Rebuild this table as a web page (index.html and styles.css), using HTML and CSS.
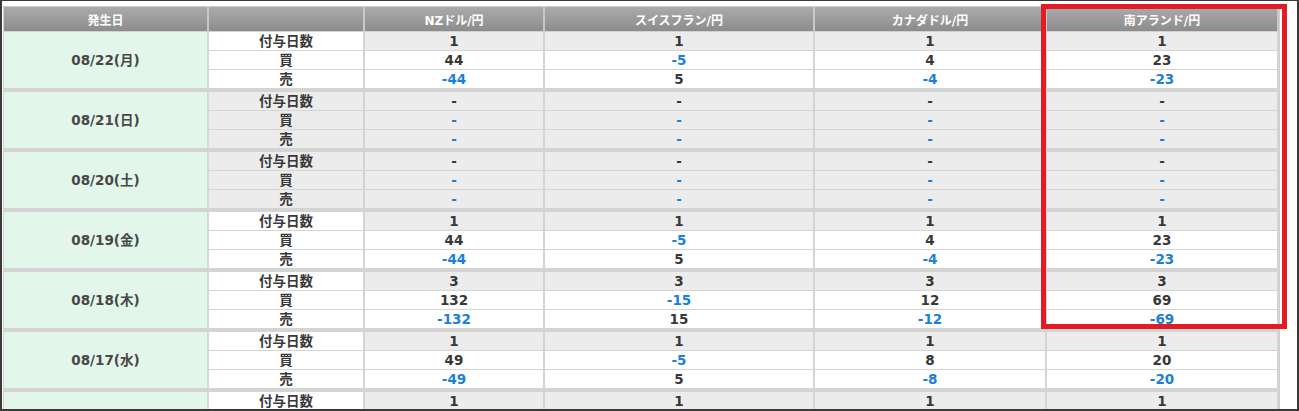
FILE: index.html
```html
<!DOCTYPE html>
<html lang="ja">
<head>
<meta charset="utf-8">
<title>スワップポイント</title>
<link rel="stylesheet" href="styles.css">
</head>
<body>
<div class="frame">
  <table class="swap">
    <colgroup>
      <col class="c-date"><col class="c-label"><col class="c-nz"><col class="c-chf"><col class="c-cad"><col class="c-zar">
    </colgroup>
    <thead>
      <tr><th>発生日</th><th></th><th>NZドル/円</th><th>スイスフラン/円</th><th>カナダドル/円</th><th>南アランド/円</th></tr>
    </thead>
    <tbody>
      <tr class="r1"><td class="date" rowspan="3">08/22(月)</td><td class="label">付与日数</td><td>1</td><td>1</td><td>1</td><td>1</td></tr>
      <tr class="r2"><td class="label">買</td><td>44</td><td class="neg">-5</td><td>4</td><td>23</td></tr>
      <tr class="r3"><td class="label">売</td><td class="neg">-44</td><td>5</td><td class="neg">-4</td><td class="neg">-23</td></tr>
    </tbody>
    <tbody class="off">
      <tr class="r1"><td class="date" rowspan="3">08/21(日)</td><td class="label">付与日数</td><td>-</td><td>-</td><td>-</td><td>-</td></tr>
      <tr class="r2"><td class="label">買</td><td class="neg">-</td><td class="neg">-</td><td class="neg">-</td><td class="neg">-</td></tr>
      <tr class="r3"><td class="label">売</td><td class="neg">-</td><td class="neg">-</td><td class="neg">-</td><td class="neg">-</td></tr>
    </tbody>
    <tbody class="off">
      <tr class="r1"><td class="date" rowspan="3">08/20(土)</td><td class="label">付与日数</td><td>-</td><td>-</td><td>-</td><td>-</td></tr>
      <tr class="r2"><td class="label">買</td><td class="neg">-</td><td class="neg">-</td><td class="neg">-</td><td class="neg">-</td></tr>
      <tr class="r3"><td class="label">売</td><td class="neg">-</td><td class="neg">-</td><td class="neg">-</td><td class="neg">-</td></tr>
    </tbody>
    <tbody>
      <tr class="r1"><td class="date" rowspan="3">08/19(金)</td><td class="label">付与日数</td><td>1</td><td>1</td><td>1</td><td>1</td></tr>
      <tr class="r2"><td class="label">買</td><td>44</td><td class="neg">-5</td><td>4</td><td>23</td></tr>
      <tr class="r3"><td class="label">売</td><td class="neg">-44</td><td>5</td><td class="neg">-4</td><td class="neg">-23</td></tr>
    </tbody>
    <tbody>
      <tr class="r1"><td class="date" rowspan="3">08/18(木)</td><td class="label">付与日数</td><td>3</td><td>3</td><td>3</td><td>3</td></tr>
      <tr class="r2"><td class="label">買</td><td>132</td><td class="neg">-15</td><td>12</td><td>69</td></tr>
      <tr class="r3"><td class="label">売</td><td class="neg">-132</td><td>15</td><td class="neg">-12</td><td class="neg">-69</td></tr>
    </tbody>
    <tbody>
      <tr class="r1"><td class="date" rowspan="3">08/17(水)</td><td class="label">付与日数</td><td>1</td><td>1</td><td>1</td><td>1</td></tr>
      <tr class="r2"><td class="label">買</td><td>49</td><td class="neg">-5</td><td>8</td><td>20</td></tr>
      <tr class="r3"><td class="label">売</td><td class="neg">-49</td><td>5</td><td class="neg">-8</td><td class="neg">-20</td></tr>
    </tbody>
    <tbody>
      <tr class="r1 last"><td class="date"></td><td class="label">付与日数</td><td>1</td><td>1</td><td>1</td><td>1</td></tr>
    </tbody>
  </table>
  <div class="highlight"></div>
</div>
</body>
</html>
```

FILE: styles.css
```css
* { box-sizing: border-box; }

html, body {
  margin: 0;
  padding: 0;
  background: #fff;
}

body {
  font-family: "DejaVu Sans", "Noto Sans CJK JP", sans-serif;
}

.frame {
  position: relative;
  width: 1299px;
  height: 411px;
  border: 2px solid #3a3a3a;
  border-top-width: 1px;
  padding: 5px 0 0 1px;
  overflow: hidden;
  background: #fff;
}

.swap {
  border-collapse: separate;
  border-spacing: 0;
  table-layout: fixed;
  width: 1277px;
  border: 1px solid #cfcfcf;
}

.c-date { width: 205px; }
.c-label { width: 156px; }
.c-nz { width: 180px; }
.c-chf { width: 270px; }
.c-cad { width: 232px; }
.c-zar { width: 232px; }

.swap th {
  height: 25px;
  padding: 0;
  background: linear-gradient(#ababab, #8c8c8c);
  color: #fff;
  font-size: 12px;
  font-weight: bold;
  text-align: center;
  border-right: 2px solid #c8c8c8;
  border-bottom: 1px solid #d2d2d2;
}

.swap td {
  height: 19px;
  padding: 0;
  font-size: 13.5px;
  line-height: 17px;
  font-weight: bold;
  color: #383838;
  text-align: center;
  vertical-align: middle;
  background: #fff;
  border-right: 2px solid #d4d4d4;
  border-bottom: 1px solid #d4d4d4;
}

.swap .r1 td { background: #ececec; }
.swap .r1 td.label { background: #fff; }

.swap .r3 td,
.swap td.date {
  border-bottom: 4px solid #d4d4d4;
}

.swap .r3 td { height: 22px; }

.swap td.date {
  height: auto;
  background: #e3f6ea;
  color: #484848;
  border-right-color: #d2dcd5;
}

.swap .last td.date { border-bottom-width: 1px; }

.swap .off td,
.swap .off .r1 td.label {
  background: #ececec;
}

.swap .off td.date { background: #e3f6ea; }

.swap td.neg { color: #1b80d8; }

.highlight {
  position: absolute;
  left: 1039px;
  top: 3px;
  width: 246px;
  height: 325px;
  border: 5px solid #e31b23;
  pointer-events: none;
}
```
